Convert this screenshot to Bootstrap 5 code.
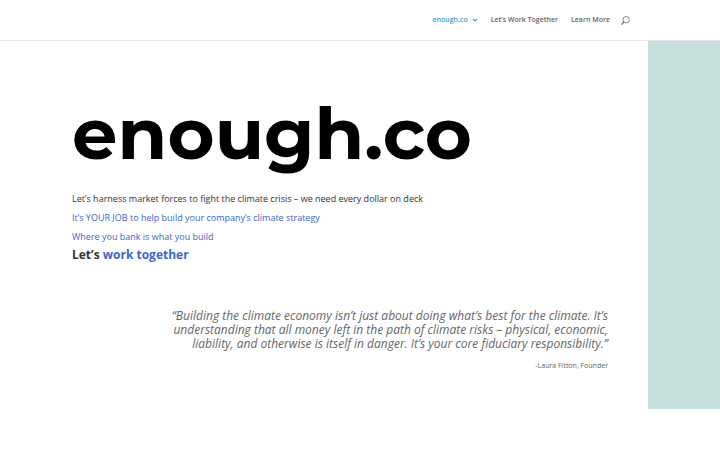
<!DOCTYPE html>
<html lang="en">
<head>
<meta charset="utf-8">
<meta name="viewport" content="width=device-width, initial-scale=1">
<title>enough.co</title>
<link href="https://cdn.jsdelivr.net/npm/bootstrap@5.3.0/dist/css/bootstrap.min.css" rel="stylesheet">
<style>
body { font-family: "Open Sans", sans-serif; color: #666; background: #fff; }
a { text-decoration: none; color: #3a66d0; }
.site-header { padding: 14px 90px 14px 72px; border-bottom: 1px solid #e6e9e9; }
.site-nav { font-size: 7px; font-weight: 600; gap: 13px; line-height: 12px; }
.site-nav a { color: #666; }
.site-nav a.current { color: #2ea3d2; }
.chevron { width: 6px; height: 6px; margin-left: 4px; stroke-width: 1.2; }
.search-btn { line-height: 0; color: #666; margin-left: 11px; }
.main-band { background: #c6e0dd; padding-right: 10%; }
.panel { background: #fff; padding: 52px 40px 37px 72px; }
.wordmark { font-family: Montserrat, "Open Sans", sans-serif; font-weight: 700; color: #000; font-size: 72px; line-height: 80px; margin: 0 0 19px; }
.intro { color: #333; }
.intro p { font-size: 9px; line-height: 14px; margin: 0 0 5px; }
.intro p:last-of-type { margin-bottom: 3px; }
.intro h2 { font-size: 12px; line-height: 16px; font-weight: 700; margin: 0; }
.quote { text-align: right; margin: 46px 0 0 90px; }
.quote p { font-size: 12px; line-height: 14px; font-style: italic; margin: 0; }
.quote footer { font-size: 7px; line-height: 12px; margin-top: 9px; }
</style>
<script src="https://cdn.jsdelivr.net/npm/bootstrap@5.3.0/dist/js/bootstrap.bundle.min.js"></script>
</head>
<body>
<header class="site-header d-flex align-items-center justify-content-end">
<nav class="site-nav d-flex align-items-center" aria-label="Main">
<a class="current d-flex align-items-center" href="#" aria-current="page">enough.co <svg class="chevron" viewBox="0 0 6 6" fill="none" stroke="currentColor" aria-hidden="true"><path d="M1 2l2 2 2-2"/></svg></a>
<a href="#">Let’s Work Together</a>
<a href="#">Learn More</a>
</nav>
<button class="search-btn border-0 bg-transparent p-0" type="button" aria-label="Search"><svg width="9" height="9" viewBox="0 0 9 9" fill="none" stroke="currentColor" stroke-width="0.8" aria-hidden="true"><circle cx="5.2" cy="3.7" r="3.2"/><path d="M3 6L.5 8.6" stroke-width="1.1"/></svg></button>
</header>
<main class="main-band">
<div class="panel">
<h1 class="wordmark">enough.co</h1>
<div class="intro">
<p>Let’s harness market forces to fight the climate crisis – we need every dollar on deck</p>
<p><a href="#">It’s YOUR JOB to help build your company’s climate strategy</a></p>
<p><a href="#">Where you bank is what you build</a></p>
<h2>Let’s <a href="#">work together</a></h2>
</div>
<blockquote class="quote">
<p>“Building the climate economy isn’t just about doing what’s best for the climate. It’s understanding that all money left in the path of climate risks – physical, economic, liability, and otherwise is itself in danger. It’s your core fiduciary responsibility.”</p>
<footer>-Laura Fitton, Founder</footer>
</blockquote>
</div>
</main>
</body>
</html>
